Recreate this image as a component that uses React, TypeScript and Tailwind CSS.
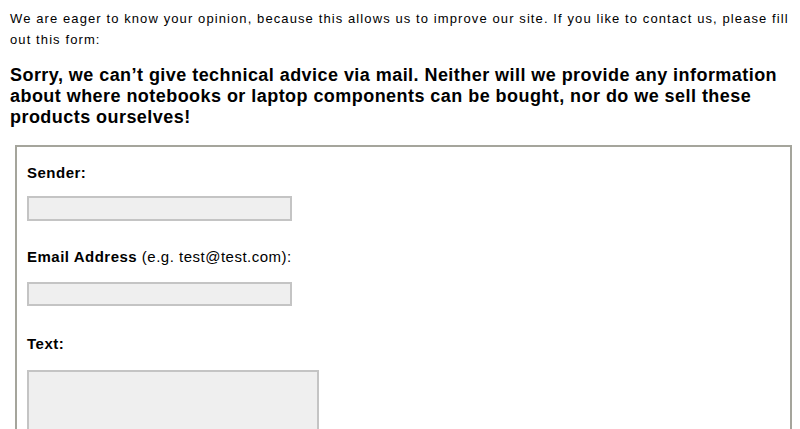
export default function App() {
  return (
    <div className="h-[429px] overflow-hidden bg-white pl-[10px] pr-[8px] pt-[8px] text-black [font-family:'Liberation_Sans',Arial,sans-serif]">
      <p className="text-[13px] leading-[21px] tracking-[1.1px]">
        We are eager to know your opinion, because this allows us to improve our site. If you like to contact us, please fill out this form:
      </p>

      <h2 className="mt-[15px] text-[18px] font-bold leading-[21px] tracking-[0.45px]">
        Sorry, we can’t give technical advice via mail. Neither will we provide any information about where notebooks or laptop components can be bought, nor do we sell these products ourselves!
      </h2>

      <form className="ml-[5px] mt-[17px] h-[300px] border-2 border-[#a5a59c] px-[10px] pt-[17px]">
        <div className="text-[15px] font-bold leading-[18px] tracking-[0.5px]">Sender:</div>
        <input
          type="text"
          className="mt-[14px] block h-[25px] w-[265px] border-2 border-[#c4c4c4] bg-[#efefef] outline-none"
        />

        <div className="mt-[27px] text-[15px] leading-[18px] tracking-[0.5px]">
          <span className="font-bold">Email Address</span> (e.g. test@test.com):
        </div>
        <input
          type="text"
          className="mt-[16px] block h-[24px] w-[265px] border-2 border-[#c4c4c4] bg-[#efefef] outline-none"
        />

        <div className="mt-[29px] text-[15px] font-bold leading-[18px] tracking-[0.5px]">Text:</div>
        <textarea className="mt-[17px] block h-[90px] w-[292px] resize-none border-2 border-[#c4c4c4] bg-[#efefef] outline-none" />
      </form>
    </div>
  );
}
